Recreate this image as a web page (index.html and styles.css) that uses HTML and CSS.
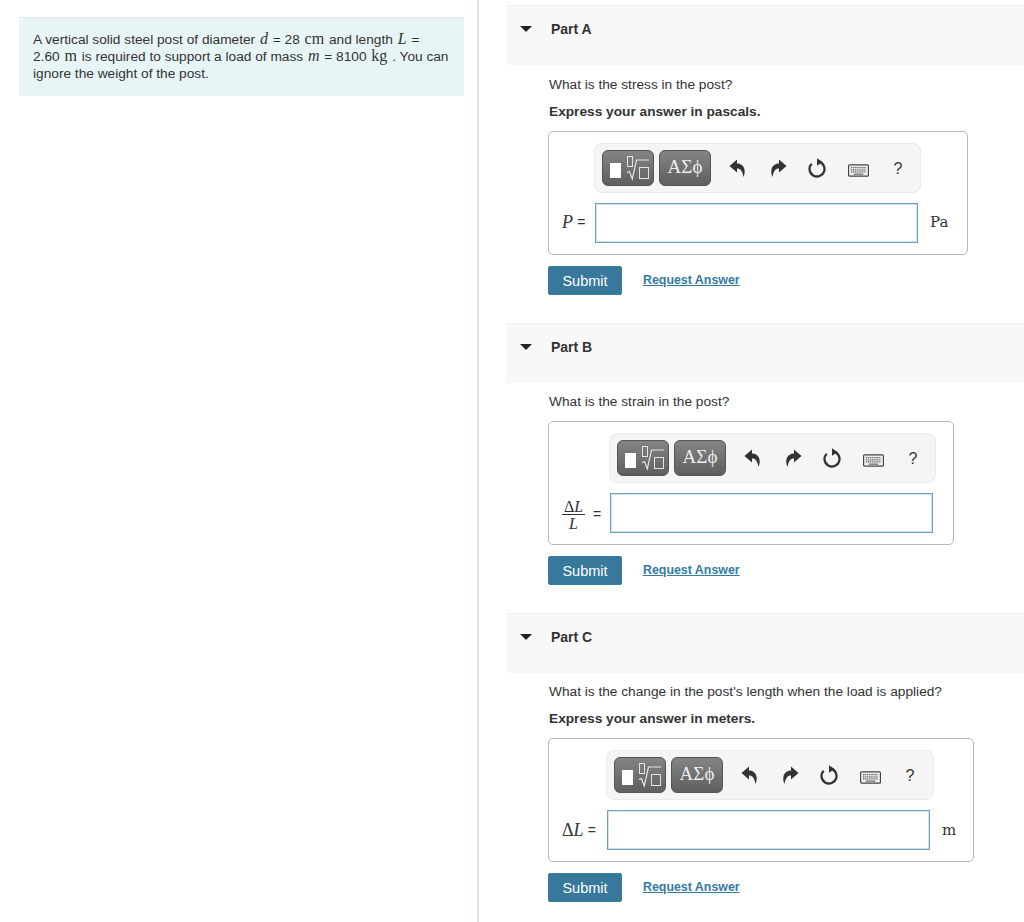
FILE: index.html
```html
<!DOCTYPE html>
<html lang="en">
<head>
<meta charset="utf-8">
<title>Steel post problem</title>
<link rel="stylesheet" href="styles.css">
</head>
<body>
<svg class="defs" width="0" height="0" aria-hidden="true">
  <symbol id="i-templates" viewBox="0 0 52 36">
    <rect x="8" y="13" width="11" height="15" fill="#fff"/>
    <rect x="25.5" y="6.5" width="5" height="10" fill="none" stroke="#e4e4e4"/>
    <path d="M25 22.5l2.500-1 2.800 7.500 4.200-19H47" fill="none" stroke="#e4e4e4" stroke-width="1.200"/>
    <rect x="37.500" y="17.500" width="9" height="11" fill="none" stroke="#e4e4e4"/>
  </symbol>
  <symbol id="i-undo" viewBox="0 0 20 20">
    <path d="M9 1.500L1.500 8 9 14.500v-4c3.500 0 5.500 2.500 6.500 8.500 3-7 .5-13.500-6.500-13.500z" fill="#333"/>
  </symbol>
  <symbol id="i-redo" viewBox="0 0 20 20">
    <path d="M11 1.500L18.500 8 11 14.500v-4c-3.500 0-5.500 2.500-6.500 8.500-3-7-.5-13.500 6.500-13.500z" fill="#333"/>
  </symbol>
  <symbol id="i-reload" viewBox="0 0 20 20">
    <path d="M3.700 5.700a7.500 7.500 0 1 0 5.800-2.200" fill="none" stroke="#333" stroke-width="2.300"/>
    <path d="M9 .3l5.500 3.700L9 7.800z" fill="#333"/>
  </symbol>
  <symbol id="i-keyboard" viewBox="0 0 22 13">
    <rect x=".6" y=".6" width="20.800" height="11.800" rx="1" fill="#eee" stroke="#444" stroke-width="1.200"/>
    <path d="M3 3.500h16M3 5.800h16M3 8h16" stroke="#666" stroke-width="1.200" stroke-dasharray="1.300 .7"/>
    <path d="M6 10.300h10" stroke="#555" stroke-width="1.100"/>
  </symbol>
</svg>

<main class="page">
  <aside class="intro-col">
    <p class="intro">A vertical solid steel post of diameter <i class="mv">d</i> = 28 <span class="mr">cm</span> and length <i class="mv">L</i> =<br>2.60 <span class="mr">m</span> is required to support a load of mass <i class="mv">m</i> = 8100 <span class="mr">kg</span> . You can<br>ignore the weight of the post.</p>
  </aside>

  <section class="parts">
    <article class="part part-a">
      <header class="part-head"><span class="caret"></span><h2>Part A</h2></header>
      <div class="part-body">
        <p class="q">What is the stress in the post?</p>
        <p class="q bold">Express your answer in pascals.</p>
        <div class="box box-a">
          <div class="toolbar">
            <span class="tb-btn"><svg class="i-t"><use href="#i-templates"/></svg></span>
            <span class="tb-btn greek">ΑΣϕ</span>
            <span class="tb-i"><svg class="ic"><use href="#i-undo"/></svg></span>
            <span class="tb-i"><svg class="ic"><use href="#i-redo"/></svg></span>
            <span class="tb-i"><svg class="ic"><use href="#i-reload"/></svg></span>
            <span class="tb-i"><svg class="kb"><use href="#i-keyboard"/></svg></span>
            <span class="tb-i help">?</span>
          </div>
          <label class="lbl"><i class="mv">P</i>&nbsp;<span class="eq">=</span></label>
          <span class="field"></span>
          <span class="unit">Pa</span>
        </div>
        <div class="actions"><button class="submit">Submit</button><a class="req" href="#">Request Answer</a></div>
      </div>
    </article>

    <article class="part part-b">
      <header class="part-head"><span class="caret"></span><h2>Part B</h2></header>
      <div class="part-body">
        <p class="q">What is the strain in the post?</p>
        <div class="box box-b">
          <div class="toolbar">
            <span class="tb-btn"><svg class="i-t"><use href="#i-templates"/></svg></span>
            <span class="tb-btn greek">ΑΣϕ</span>
            <span class="tb-i"><svg class="ic"><use href="#i-undo"/></svg></span>
            <span class="tb-i"><svg class="ic"><use href="#i-redo"/></svg></span>
            <span class="tb-i"><svg class="ic"><use href="#i-reload"/></svg></span>
            <span class="tb-i"><svg class="kb"><use href="#i-keyboard"/></svg></span>
            <span class="tb-i help">?</span>
          </div>
          <label class="lbl"><span class="frac"><span class="num">Δ<i class="mv">L</i></span><span class="den"><i class="mv">L</i></span></span><span class="eq eq-f">=</span></label>
          <span class="field"></span>
        </div>
        <div class="actions"><button class="submit">Submit</button><a class="req" href="#">Request Answer</a></div>
      </div>
    </article>

    <article class="part part-c">
      <header class="part-head"><span class="caret"></span><h2>Part C</h2></header>
      <div class="part-body">
        <p class="q">What is the change in the post's length when the load is applied?</p>
        <p class="q bold">Express your answer in meters.</p>
        <div class="box box-c">
          <div class="toolbar">
            <span class="tb-btn"><svg class="i-t"><use href="#i-templates"/></svg></span>
            <span class="tb-btn greek">ΑΣϕ</span>
            <span class="tb-i"><svg class="ic"><use href="#i-undo"/></svg></span>
            <span class="tb-i"><svg class="ic"><use href="#i-redo"/></svg></span>
            <span class="tb-i"><svg class="ic"><use href="#i-reload"/></svg></span>
            <span class="tb-i"><svg class="kb"><use href="#i-keyboard"/></svg></span>
            <span class="tb-i help">?</span>
          </div>
          <label class="lbl"><span class="delta">Δ</span><i class="mv">L</i>&nbsp;<span class="eq">=</span></label>
          <span class="field"></span>
          <span class="unit">m</span>
        </div>
        <div class="actions"><button class="submit">Submit</button><a class="req" href="#">Request Answer</a></div>
      </div>
    </article>
  </section>
</main>
</body>
</html>
```
FILE: styles.css
```css
* { box-sizing: border-box; }
html, body { margin: 0; padding: 0; }
body {
  background: #fff;
  color: #333;
  font-family: "Liberation Sans", Arial, sans-serif;
  font-size: 13.7px;
  line-height: 17px;
  height: 922px;
  overflow: hidden;
}
.defs { position: absolute; }
.page { display: flex; align-items: stretch; height: 922px; }

.intro-col {
  width: 479px;
  flex: none;
  padding: 17px 13px 0 19px;
  border-right: 2px solid #d6e3f1;
}
.intro {
  margin: 0;
  height: 79px;
  padding: 13px 0 0 14px;
  background: #e8f5f7;
  border-top: 1px solid #dfe8ea;
}
.mv { font-family: "Liberation Serif", serif; font-size: 16px; font-style: italic; line-height: 14px; margin: 0 1px; }
.mr { font-family: "Liberation Serif", serif; font-size: 16px; line-height: 14px; margin: 0 1px; }

.parts { margin-left: 27px; flex: 1; padding-top: 5px; }
.part-a { height: 318px; }
.part-b { height: 290px; }
.part-head {
  height: 60px;
  background: #f8f8f8;
  border-top: 1px solid #f0f0f0;
  display: flex;
  align-items: flex-start;
  padding: 15px 0 0 14px;
}
.caret {
  width: 0;
  height: 0;
  margin-top: 5px;
  border-left: 6px solid transparent;
  border-right: 6px solid transparent;
  border-top: 6px solid #222;
}
.part-head h2 { margin: 0 0 0 19px; font-size: 14px; line-height: 17px; font-weight: bold; }
.part-body { padding: 10px 0 0 42px; }
.part-a .part-body { padding-top: 11px; }
.q { margin: 0 0 10px; padding-left: 1px; }
.q.bold { font-weight: bold; margin-bottom: 11px; }
.part-b .q { margin-bottom: 11px; }

.box {
  display: grid;
  grid-template-rows: 50px 40px;
  row-gap: 10px;
  align-items: center;
  height: 124px;
  padding-top: 11px;
  border: 1px solid #b8b8b8;
  border-radius: 5px;
  background: #fff;
  justify-items: start;
}
.box-a { width: 420px; grid-template-columns: 46px 323px 1fr; }
.box-b { width: 406px; grid-template-columns: 61px 323px; }
.box-c { width: 426px; grid-template-columns: 58px 323px 1fr; }

.toolbar {
  grid-column: 2 / -1;
  grid-row: 1;
  margin-left: -1px;
  width: 327px;
  height: 50px;
  display: flex;
  align-items: center;
  padding-left: 7px;
  background: #f5f5f5;
  border: 1px solid #ebebeb;
  border-radius: 8px;
}
.box-c .toolbar { width: 328px; }
.tb-btn {
  width: 52px;
  height: 36px;
  margin-right: 5px;
  flex: none;
  display: flex;
  align-items: center;
  justify-content: center;
  border: 1px solid #555;
  border-radius: 6px;
  background: linear-gradient(#848484, #5f5f5f);
}
.i-t { width: 52px; height: 36px; flex: none; margin: -1px; }
.greek { color: #ececec; font-family: "Liberation Serif", serif; font-size: 19px; padding-bottom: 3px; }
.tb-i {
  width: 40px;
  height: 36px;
  flex: none;
  display: flex;
  align-items: center;
  justify-content: center;
}
.tb-btn + .tb-i { margin-left: 2px; }
.ic { width: 20px; height: 20px; }
.kb { width: 21px; height: 13px; margin-top: 4px; }
.help { font-size: 16px; color: #333; }

.lbl {
  grid-row: 2;
  grid-column: 1;
  padding: 0 0 2px 13px;
  font-family: "Liberation Serif", serif;
  font-size: 17px;
  display: flex;
  align-items: center;
  white-space: nowrap;
}
.lbl > .mv { margin: 0; font-size: 18px; }
.box-c .lbl { padding-bottom: 0; }
.box-b .lbl { padding-bottom: 2px; }
.eq { font-family: "Liberation Sans", sans-serif; font-size: 14px; }
.eq-f { margin-left: 8px; padding-top: 5px; }
.delta { font-size: 18px; }
.frac { display: inline-flex; flex-direction: column; align-items: center; width: 23px; font-size: 16px; line-height: 15px; padding-top: 5px; }
.frac .mv { font-size: 16px; line-height: 15px; margin: 0; }
.num { display: block; width: 100%; text-align: center; border-bottom: 1px solid #333; }
.den { padding-top: 1px; }
.field {
  grid-row: 2;
  grid-column: 2;
  width: 323px;
  height: 40px;
  border: 1px solid #6ba3c0;
  box-shadow: inset 0 0 0 1px rgba(107, 163, 192, .3);
  background: #fff;
}
.unit {
  grid-row: 2;
  grid-column: 3;
  padding: 0 0 2px 12px;
  font-family: "DejaVu Serif", serif;
  font-size: 15px;
}
.box-c .unit { padding-bottom: 0; }

.actions { display: flex; align-items: center; margin-top: 11px; height: 29px; }
.submit {
  width: 74px;
  height: 29px;
  padding: 0;
  border: 1px solid #3a7ba0;
  border-radius: 2px;
  background: #37789b;
  color: #fff;
  font-family: "Liberation Sans", sans-serif;
  font-size: 14.5px;
}
.req {
  margin-left: 21px;
  color: #337ba3;
  font-size: 12.4px;
  font-weight: bold;
  text-decoration: underline;
}
.part-a .req { margin-bottom: 1px; }
```
